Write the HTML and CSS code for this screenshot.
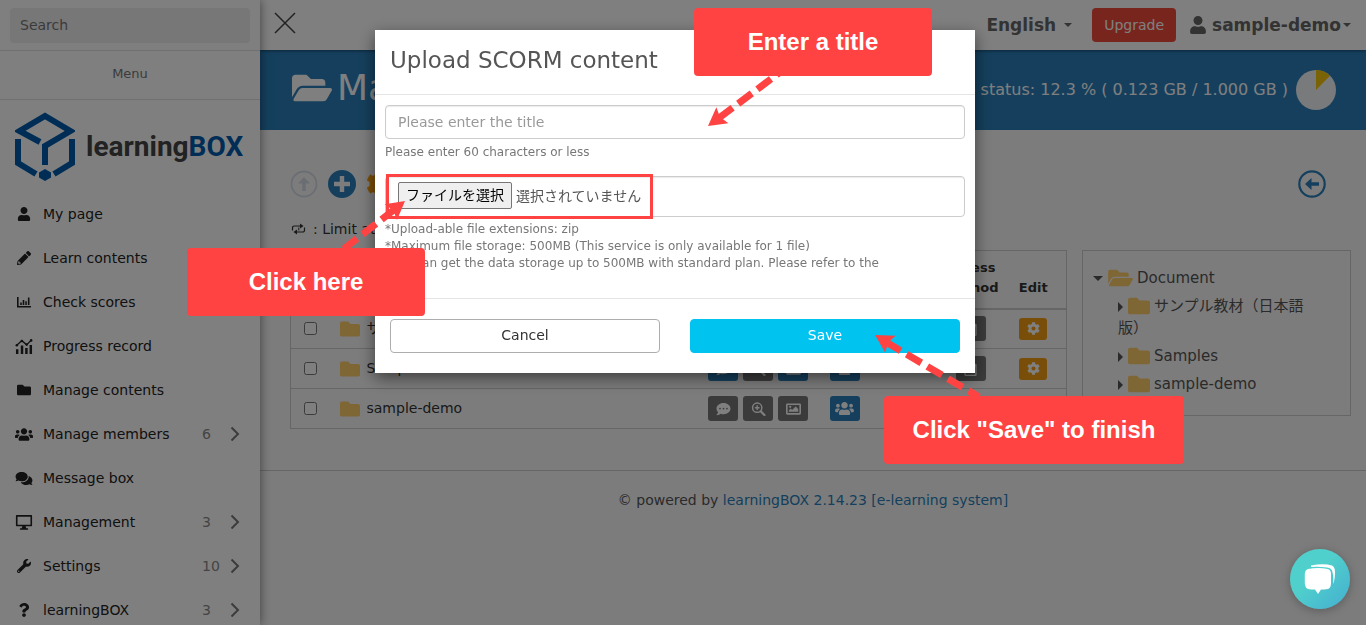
FILE: index.html
```html
<!DOCTYPE html>
<html lang="en">
<head>
    <meta charset="UTF-8">
    <meta name="viewport" content="width=device-width, initial-scale=1.0">
    <title>Manage contents - learningBOX</title>
    <link rel="stylesheet" href="styles.css">
</head>
<body>
    <!-- Icon sprite -->
    <svg class="sprite" aria-hidden="true">
        <symbol id="i-user" viewBox="0 0 448 512"><path d="M224 256c70.7 0 128-57.3 128-128S294.7 0 224 0 96 57.3 96 128s57.3 128 128 128zm89.6 32h-16.7c-22.2 10.2-46.9 16-72.9 16s-50.6-5.8-72.9-16h-16.7C60.2 288 0 348.2 0 422.4V464c0 26.5 21.5 48 48 48h352c26.5 0 48-21.5 48-48v-41.6c0-74.2-60.2-134.4-134.4-134.4z"/></symbol>
        <symbol id="i-pencil" viewBox="0 0 512 512"><path fill-rule="evenodd" d="M497.9 142.1l-46.1 46.1c-4.7 4.7-12.3 4.7-17 0l-111-111c-4.7-4.7-4.7-12.3 0-17l46.1-46.1c18.7-18.7 49.1-18.7 67.9 0l60.1 60.1c18.8 18.7 18.8 49.1 0 67.9zM284.2 99.8L21.6 362.4.4 483.9c-2.9 16.4 11.4 30.6 27.8 27.8l121.5-21.3 262.6-262.6c4.7-4.7 4.7-12.3 0-17l-111-111c-4.8-4.7-12.4-4.7-17.1 0zM88 424h48v36.300l-64.500 11.300-31.100-31.100L51.700 376H88z"/></symbol>
        <symbol id="i-chart" viewBox="0 0 14 14"><path d="M0 2h1.600v8.900H14v1.600H0zM3.200 7.500h1.600v2.400H3.200zM5.700 5h1.600v4.900H5.700zM8.300 6.300h1.500v3.600H8.300zM10.900 2.500h1.600v7.400h-1.600z"/></symbol>
        <symbol id="i-progress" viewBox="0 0 16 14"><path d="M.5 9.500h2.300V14H.5zM5 6h2.300v8H5zM9.100 8.500h2.300V14H9.100zM13.200 5.500h2.300V14h-2.300z"/><path d="M1 6l5-4.500 4.500 4L15 .8" fill="none" stroke="currentColor" stroke-width="1.300"/><circle cx="1.300" cy="5.800" r="1.200"/><circle cx="6" cy="1.800" r="1.200"/><circle cx="10.500" cy="5.200" r="1.200"/><circle cx="14.700" cy="1.300" r="1.200"/></symbol>
        <symbol id="i-folder" viewBox="0 0 512 512"><path d="M464 128H272l-64-64H48C21.490 64 0 85.490 0 112v288c0 26.510 21.490 48 48 48h416c26.510 0 48-21.490 48-48V176c0-26.510-21.490-48-48-48z"/></symbol>
        <symbol id="i-folder-open" viewBox="0 0 576 512"><path d="M572.694 292.093L500.270 416.248A63.997 63.997 0 0 1 444.989 448H45.025c-18.523 0-30.064-20.093-20.731-36.093l72.424-124.155A64 64 0 0 1 152 256h399.964c18.523 0 30.064 20.093 20.730 36.093zM152 224h328v-48c0-26.510-21.490-48-48-48H272l-64-64H48C21.490 64 0 85.490 0 112v278.046l69.077-118.418C86.214 242.250 117.989 224 152 224z"/></symbol>
        <symbol id="i-users" viewBox="0 0 640 512"><path d="M96 224c35.300 0 64-28.700 64-64s-28.700-64-64-64-64 28.700-64 64 28.700 64 64 64zm448 0c35.300 0 64-28.700 64-64s-28.700-64-64-64-64 28.700-64 64 28.700 64 64 64zm32 32h-64c-17.600 0-33.500 7.100-45.100 18.600 40.300 22.100 68.900 62 75.100 109.400h66c17.700 0 32-14.300 32-32v-32c0-35.300-28.700-64-64-64zm-256 0c61.900 0 112-50.100 112-112S381.900 32 320 32 208 82.100 208 144s50.100 112 112 112zm76.800 32h-8.300c-20.800 10-43.900 16-68.500 16s-47.600-6-68.500-16h-8.300C179.600 288 128 339.600 128 403.200V432c0 26.500 21.500 48 48 48h288c26.500 0 48-21.500 48-48v-28.800c0-63.600-51.600-115.200-115.200-115.200zm-223.700-13.400C161.500 263.100 145.600 256 128 256H64c-35.300 0-64 28.700-64 64v32c0 17.700 14.300 32 32 32h65.900c6.300-47.400 34.900-87.300 75.200-109.400z"/></symbol>
        <symbol id="i-comments" viewBox="0 0 576 512"><path d="M416 192c0-88.400-93.100-160-208-160S0 103.600 0 192c0 34.300 14.100 65.900 38 92-13.400 30.200-35.500 54.200-35.800 54.500-2.200 2.300-2.800 5.700-1.500 8.700S4.800 352 8 352c36.600 0 66.900-12.300 88.700-25 32.200 15.700 70.300 25 111.300 25 114.900 0 208-71.600 208-160zm122 220c23.900-26 38-57.700 38-92 0-66.900-53.500-124.200-129.300-148.100.9 6.600 1.300 13.300 1.300 20.100 0 105.900-107.700 192-240 192-10.800 0-21.300-.8-31.700-1.900C207.800 439.600 281.800 480 368 480c41 0 79.100-9.200 111.300-25 21.800 12.700 52.100 25 88.700 25 3.200 0 6.100-1.900 7.300-4.800 1.300-2.900.7-6.300-1.500-8.700-.3-.3-22.400-24.200-35.800-54.500z"/></symbol>
        <symbol id="i-comment" viewBox="0 0 512 512"><path fill-rule="evenodd" d="M256 32C114.600 32 0 125.100 0 240c0 49.600 21.400 95 57 130.700C44.500 421.100 2.700 466 2.200 466.500c-2.200 2.300-2.800 5.700-1.500 8.700S4.800 480 8 480c66.300 0 116-31.800 140.600-51.400 32.700 12.300 69 19.400 107.400 19.400 141.400 0 256-93.100 256-208S397.400 32 256 32zM128 272a32 32 0 1 1 0-64 32 32 0 0 1 0 64zm128 0a32 32 0 1 1 0-64 32 32 0 0 1 0 64zm128 0a32 32 0 1 1 0-64 32 32 0 0 1 0 64z"/></symbol>
        <symbol id="i-desktop" viewBox="0 0 16 14"><path d="M1.200.8h13.600v9H1.200z" fill="none" stroke="currentColor" stroke-width="1.500" stroke-linejoin="round"/><path d="M6.500 10h3l.5 2.300h1.800v1.500H4.200v-1.500H6z"/></symbol>
        <symbol id="i-wrench" viewBox="0 0 512 512"><path d="M507.730 109.100c-2.240-9.030-13.540-12.090-20.120-5.510l-74.360 74.360-67.880-11.310-11.310-67.880 74.360-74.360c6.620-6.620 3.430-17.900-5.660-20.160-47.380-11.740-99.550.91-136.580 37.930-39.640 39.640-50.550 97.100-34.050 147.200L18.740 402.760c-24.990 24.990-24.990 65.510 0 90.500 24.990 24.990 65.510 24.990 90.500 0l213.210-213.210c50.120 16.710 107.470 5.680 147.370-34.220 37.070-37.070 49.700-89.320 37.910-136.730zM64 472c-13.250 0-24-10.750-24-24 0-13.260 10.750-24 24-24s24 10.740 24 24c0 13.250-10.750 24-24 24z"/></symbol>
        <symbol id="i-question" viewBox="0 0 384 512"><path d="M202.021 0C122.202 0 70.503 32.703 29.914 91.026c-7.363 10.580-5.093 25.086 5.178 32.874l43.138 32.709c10.373 7.865 25.132 6.026 33.253-4.148 25.049-31.381 43.630-49.449 82.757-49.449 30.764 0 68.816 19.799 68.816 49.631 0 22.552-18.617 34.134-48.993 51.164-35.423 19.860-82.299 44.576-82.299 106.405V320c0 13.255 10.745 24 24 24h72.471c13.255 0 24-10.745 24-24v-5.773c0-42.860 125.268-44.645 125.268-160.627C377.504 66.256 286.902 0 202.021 0zM192 373.459c-38.196 0-69.271 31.075-69.271 69.271 0 38.195 31.075 69.270 69.271 69.270s69.271-31.075 69.271-69.271-31.075-69.270-69.271-69.270z"/></symbol>
        <symbol id="i-cog" viewBox="0 0 512 512"><path d="M487.400 315.700l-42.600-24.600c4.300-23.200 4.300-47 0-70.200l42.600-24.600c4.900-2.800 7.100-8.600 5.500-14-11.100-35.600-30-67.800-54.700-94.600-3.800-4.100-10-5.100-14.800-2.300L380.800 110c-17.900-15.400-38.500-27.300-60.800-35.100V25.800c0-5.600-3.900-10.500-9.400-11.700-36.700-8.200-74.300-7.800-109.200 0-5.500 1.200-9.400 6.100-9.400 11.700V75c-22.200 7.900-42.800 19.800-60.800 35.100L88.700 85.500c-4.900-2.800-11-1.900-14.800 2.300-24.700 26.700-43.600 58.900-54.700 94.600-1.700 5.400.6 11.200 5.500 14L67.300 221c-4.300 23.200-4.300 47 0 70.200l-42.600 24.600c-4.900 2.800-7.100 8.600-5.500 14 11.100 35.600 30 67.800 54.700 94.600 3.800 4.100 10 5.100 14.800 2.300l42.600-24.600c17.900 15.400 38.500 27.300 60.800 35.100v49.200c0 5.600 3.900 10.500 9.400 11.700 36.700 8.200 74.300 7.800 109.200 0 5.500-1.200 9.400-6.100 9.400-11.700v-49.200c22.200-7.900 42.800-19.800 60.800-35.100l42.600 24.600c4.900 2.800 11 1.900 14.800-2.300 24.700-26.700 43.600-58.900 54.700-94.600 1.500-5.500-.7-11.300-5.600-14.100zM256 336c-44.100 0-80-35.900-80-80s35.900-80 80-80 80 35.900 80 80-35.900 80-80 80z"/></symbol>
        <symbol id="i-zoom" viewBox="0 0 16 16"><g fill="none" stroke="currentColor"><circle cx="6.500" cy="6.500" r="5.300" stroke-width="1.700"/><path d="M10.500 10.500l4.300 4.300" stroke-width="2.600" stroke-linecap="round"/><path d="M6.500 3.800v5.400M3.800 6.500h5.400" stroke-width="1.600"/></g></symbol>
        <symbol id="i-image" viewBox="0 0 16 14"><path fill-rule="evenodd" d="M1.500 1h13A1.500 1.500 0 0 1 16 2.500v9a1.500 1.500 0 0 1-1.500 1.500h-13A1.500 1.500 0 0 1 0 11.500v-9A1.500 1.500 0 0 1 1.500 1zM1.700 2.700v8.600h12.600V2.700zM3 10V8.500l2-2 1.500 1.500 3.800-3.700L13 7v3zM4.500 3.500a1.200 1.200 0 1 1 0 2.400 1.200 1.200 0 0 1 0-2.400z"/></symbol>
        <symbol id="i-calendar" viewBox="0 0 14 16"><path fill-rule="evenodd" d="M3 0h2v2h4V0h2v2h1.500A1.500 1.500 0 0 1 14 3.500v11a1.500 1.500 0 0 1-1.500 1.500h-11A1.500 1.500 0 0 1 0 14.500v-11A1.500 1.500 0 0 1 1.500 2H3zM1.500 6v8.500h11V6z"/></symbol>
        <symbol id="i-chevron" viewBox="0 0 10 16"><path d="M1.500 1.500L8 8l-6.500 6.500" fill="none" stroke="currentColor" stroke-width="2"/></symbol>
        <symbol id="i-repeat" viewBox="0 0 16 12"><path d="M2 7.500V4.800Q2 3 4 3h6M14 4.500v2.700Q14 9 12 9H6" fill="none" stroke="currentColor" stroke-width="1.200"/><path d="M9.500.5l3.500 2.500-3.500 2.500zM6.500 6.500L3 9l3.500 2.500z"/><path d="M8.300 4.500v3" stroke="currentColor"/></symbol>
        <symbol id="i-arrow-circle" viewBox="0 0 28 28"><circle cx="14" cy="14" r="12.500" fill="none" stroke="currentColor" stroke-width="1.800"/><path d="M14 7l6 6.500h-4.300V21h-3.400v-7.500H8z"/></symbol>
        <symbol id="i-back-circle" viewBox="0 0 28 28"><circle cx="14" cy="14" r="12.700" fill="none" stroke="currentColor" stroke-width="2.200"/><path d="M7 14l6.500-6v4.300H21v3.400h-7.500V20z"/></symbol>
        <symbol id="i-plus-circle" viewBox="0 0 28 28"><path fill-rule="evenodd" d="M14 0a14 14 0 1 1 0 28 14 14 0 0 1 0-28zM11.800 6v5.800H6v4.400h5.800V22h4.400v-5.800H22v-4.400h-5.800V6z"/></symbol>
    </svg>

    <div class="app">
        <aside class="sidebar">
            <div class="search-box">
                <input type="text" class="search-input" placeholder="Search" aria-label="Search">
            </div>
            <p class="menu-title">Menu</p>
            <a href="#" class="logo">
                <svg class="logo-mark" viewBox="0 0 60 70" aria-hidden="true">
                    <path d="M25 30L4.500 19 30 4l25.500 15L30 34v19M3 27v24l18 11M57 27v24L39 62" fill="none" stroke="currentColor" stroke-width="6"/>
                    <path d="M30 57l6 3.500v5L30 69l-6-3.500v-5z"/>
                </svg>
                <span class="logo-text">learning<span class="logo-box">BOX</span></span>
            </a>
            <nav class="menu">
                <a href="#" class="menu-item"><svg class="menu-icon"><use href="#i-user"/></svg>My page</a>
                <a href="#" class="menu-item"><svg class="menu-icon"><use href="#i-pencil"/></svg>Learn contents</a>
                <a href="#" class="menu-item"><svg class="menu-icon"><use href="#i-chart"/></svg>Check scores</a>
                <a href="#" class="menu-item"><svg class="menu-icon wide"><use href="#i-progress"/></svg>Progress record</a>
                <a href="#" class="menu-item"><svg class="menu-icon"><use href="#i-folder"/></svg>Manage contents</a>
                <a href="#" class="menu-item"><svg class="menu-icon wide"><use href="#i-users"/></svg>Manage members<span class="count">6</span><svg class="chevron"><use href="#i-chevron"/></svg></a>
                <a href="#" class="menu-item"><svg class="menu-icon wide"><use href="#i-comments"/></svg>Message box</a>
                <a href="#" class="menu-item"><svg class="menu-icon wide"><use href="#i-desktop"/></svg>Management<span class="count">3</span><svg class="chevron"><use href="#i-chevron"/></svg></a>
                <a href="#" class="menu-item"><svg class="menu-icon"><use href="#i-wrench"/></svg>Settings<span class="count">10</span><svg class="chevron"><use href="#i-chevron"/></svg></a>
                <a href="#" class="menu-item"><svg class="menu-icon"><use href="#i-question"/></svg>learningBOX<span class="count">3</span><svg class="chevron"><use href="#i-chevron"/></svg></a>
            </nav>
        </aside>

        <div class="main">
            <header class="topbar">
                <button type="button" class="close-menu" aria-label="Close menu">
                    <svg viewBox="0 0 22 22"><path d="M1 1l20 20M21 1L1 21" stroke="currentColor" stroke-width="1.500"/></svg>
                </button>
                <button type="button" class="top-link language">English <span class="caret"></span></button>
                <a href="#" class="upgrade">Upgrade</a>
                <button type="button" class="top-link account"><svg class="account-icon"><use href="#i-user"/></svg>sample-demo<span class="caret"></span></button>
            </header>

            <div class="banner">
                <h1><svg class="banner-icon"><use href="#i-folder-open"/></svg>Manage</h1>
                <p class="storage">Storage status: 12.3 % ( 0.123 GB / 1.000 GB )</p>
                <svg class="pie" viewBox="0 0 40 40" aria-hidden="true">
                    <circle cx="20" cy="20" r="20" fill="#f1f4f9"/>
                    <path d="M20 20V0a20 20 0 0 1 14 5.700z" fill="#f5c60d"/>
                </svg>
            </div>

            <div class="content">
                <div class="toolbar">
                    <button type="button" class="tool disabled" aria-label="Up"><svg><use href="#i-arrow-circle"/></svg></button>
                    <button type="button" class="tool" aria-label="Add"><svg><use href="#i-plus-circle"/></svg></button>
                    <button type="button" class="tool orange" aria-label="Settings"><svg><use href="#i-cog"/></svg></button>
                    <button type="button" class="tool back" aria-label="Back"><svg><use href="#i-back-circle"/></svg></button>
                </div>
                <p class="legend"><svg class="legend-icon"><use href="#i-repeat"/></svg>: Limit attempts</p>

                <div class="columns">
                    <table class="contents">
                        <thead>
                            <tr>
                                <th class="col-check"></th>
                                <th>Title</th>
                                <th class="col-tools"></th>
                                <th class="col-members"></th>
                                <th class="col-status"></th>
                                <th class="col-access">Access method</th>
                                <th class="col-edit">Edit</th>
                            </tr>
                        </thead>
                        <tbody>
                            <tr>
                                <td><input type="checkbox" aria-label="サンプル教材（日本語版）"></td>
                                <td class="name"><svg class="folder"><use href="#i-folder"/></svg>サンプル教材</td>
                                <td>
                                    <div class="tools">
                                        <button type="button" class="tile blue" aria-label="Comment"><svg><use href="#i-comment"/></svg></button>
                                        <button type="button" class="tile" aria-label="Preview"><svg><use href="#i-zoom"/></svg></button>
                                        <button type="button" class="tile blue" aria-label="Image"><svg><use href="#i-image"/></svg></button>
                                    </div>
                                </td>
                                <td><button type="button" class="tile blue" aria-label="Members"><svg class="wide"><use href="#i-users"/></svg></button></td>
                                <td></td>
                                <td><button type="button" class="tile" aria-label="Period"><svg><use href="#i-calendar"/></svg></button></td>
                                <td><button type="button" class="tile edit" aria-label="Edit"><svg><use href="#i-cog"/></svg></button></td>
                            </tr>
                            <tr>
                                <td><input type="checkbox" aria-label="Samples"></td>
                                <td class="name"><svg class="folder"><use href="#i-folder"/></svg>Samples</td>
                                <td>
                                    <div class="tools">
                                        <button type="button" class="tile blue" aria-label="Comment"><svg><use href="#i-comment"/></svg></button>
                                        <button type="button" class="tile" aria-label="Preview"><svg><use href="#i-zoom"/></svg></button>
                                        <button type="button" class="tile blue" aria-label="Image"><svg><use href="#i-image"/></svg></button>
                                    </div>
                                </td>
                                <td><button type="button" class="tile blue" aria-label="Members"><svg class="wide"><use href="#i-users"/></svg></button></td>
                                <td></td>
                                <td><button type="button" class="tile" aria-label="Period"><svg><use href="#i-calendar"/></svg></button></td>
                                <td><button type="button" class="tile edit" aria-label="Edit"><svg><use href="#i-cog"/></svg></button></td>
                            </tr>
                            <tr>
                                <td><input type="checkbox" aria-label="sample-demo"></td>
                                <td class="name"><svg class="folder"><use href="#i-folder"/></svg>sample-demo</td>
                                <td>
                                    <div class="tools">
                                        <button type="button" class="tile" aria-label="Comment"><svg><use href="#i-comment"/></svg></button>
                                        <button type="button" class="tile" aria-label="Preview"><svg><use href="#i-zoom"/></svg></button>
                                        <button type="button" class="tile" aria-label="Image"><svg><use href="#i-image"/></svg></button>
                                    </div>
                                </td>
                                <td><button type="button" class="tile blue" aria-label="Members"><svg class="wide"><use href="#i-users"/></svg></button></td>
                                <td></td>
                                <td><button type="button" class="tile" aria-label="Period"><svg><use href="#i-calendar"/></svg></button></td>
                                <td><button type="button" class="tile edit" aria-label="Edit"><svg><use href="#i-cog"/></svg></button></td>
                            </tr>
                        </tbody>
                    </table>

                    <div class="tree">
                        <p class="tree-root"><span class="caret"></span><svg class="folder open"><use href="#i-folder-open"/></svg>Document</p>
                        <ul>
                            <li><span class="caret-right"></span><svg class="folder"><use href="#i-folder"/></svg>サンプル教材（日本語版）</li>
                            <li><span class="caret-right"></span><svg class="folder"><use href="#i-folder"/></svg>Samples</li>
                            <li><span class="caret-right"></span><svg class="folder"><use href="#i-folder"/></svg>sample-demo</li>
                        </ul>
                    </div>
                </div>
            </div>

            <footer class="page-footer">© powered by <a href="#">learningBOX 2.14.23 [e-learning system]</a></footer>
        </div>
    </div>

    <!-- Upload dialog -->
    <div class="overlay">
        <form class="modal" role="dialog" aria-labelledby="modalTitle">
            <h2 class="modal-header" id="modalTitle">Upload SCORM content</h2>
            <div class="modal-body">
                <input type="text" id="title" class="text-input" placeholder="Please enter the title" aria-label="Title">
                <label class="help" for="title">Please enter 60 characters or less</label>
                <div class="file-box">
                    <input type="file" id="scormFile" class="file-input">
                    <label for="scormFile" class="file-button">ファイルを選択</label>
                    <span>選択されていません</span>
                </div>
                <p class="notes">*Upload-able file extensions: zip<br>*Maximum file storage: 500MB (This service is only available for 1 file)<br>*You can get the data storage up to 500MB with standard plan. Please refer to the</p>
            </div>
            <div class="modal-footer">
                <button type="button" class="btn">Cancel</button>
                <button type="submit" class="btn save">Save</button>
            </div>

            <!-- Guide callouts, anchored to the dialog -->
            <div class="highlight"></div>
            <svg class="arrows" viewBox="0 0 600 343" aria-hidden="true">
                <g stroke="#ff4343" stroke-width="7" stroke-dasharray="17 7">
                    <path d="M344 88L404 43"/>
                    <path d="M20 179L-34 221"/>
                    <path d="M511 312L604 367"/>
                </g>
                <g fill="#ff4343">
                    <path transform="translate(333 96) rotate(-37)" d="M0 0l18-10-3 10 3 10z"/>
                    <path transform="translate(30 171) rotate(142)" d="M0 0l18-10-3 10 3 10z"/>
                    <path transform="translate(500 305) rotate(31)" d="M0 0l18-10-3 10 3 10z"/>
                </g>
            </svg>
            <div class="callout callout-title">Enter a title</div>
            <div class="callout callout-file">Click here</div>
            <div class="callout callout-save">Click "Save" to finish</div>
        </form>
    </div>

    <button type="button" class="chat" aria-label="Chat">
        <svg viewBox="0 0 32 30">
            <path d="M7 1.500Q20-1 28 1.500 31 3 31 8q0 8-2 12Q30 12 28 6.500 27 4 23 3.500 15 2.500 7 3z"/>
            <path d="M4 5q10-2 20 0 3 1 3 5v9q0 5-3 6-4 .6-7 .6L14 30l-3-4.400Q7 25.500 4 25 1 24 .8 19V10Q1 6 4 5z"/>
        </svg>
    </button>
</body>
</html>
```
FILE: styles.css
```css
:root {
    --blue: #2a7fba;
    --orange: #f39c12;
    --red: #ff4343;
    --folder: #ffcc6a;
    --border: #ccc;
}

* {
    margin: 0;
    padding: 0;
    box-sizing: border-box;
}

body {
    font-family: "DejaVu Sans", "Noto Sans CJK JP", sans-serif;
    font-size: 14px;
    line-height: 20px;
    color: #333;
    background: #f9f9f9;
    overflow: hidden;
}

a {
    text-decoration: none;
}

button {
    font: inherit;
    border: none;
    background: none;
    cursor: pointer;
}

svg {
    fill: currentColor;
    flex: none;
}

.sprite {
    display: none;
}

.app {
    display: flex;
    height: 100vh;
}

/* Sidebar */
.sidebar {
    flex: 0 0 260px;
    background: #fff;
    box-shadow: 0 0 10px rgba(0, 0, 0, 0.5);
    overflow: hidden;
    z-index: 1;
}

.search-box {
    padding: 8px 10px 7px;
    border-bottom: 1px solid #e0e0e0;
}

.search-input {
    display: block;
    width: 100%;
    height: 35px;
    padding: 0 10px 2px;
    border: none;
    border-radius: 4px;
    background: #efefef;
    font: inherit;
}

.search-input::placeholder {
    color: #777;
}

.menu-title {
    padding: 13px 0 15px;
    text-align: center;
    font-size: 13px;
    color: #777;
    border-bottom: 1px solid #e0e0e0;
}

.logo {
    display: flex;
    align-items: center;
    gap: 11px;
    padding: 12px 15px 10px;
    color: #005bac;
}

.logo-mark {
    width: 60px;
    height: 70px;
}

.logo-text {
    font: bold 28px/32px Roboto, sans-serif;
    color: #444;
}

.logo-box {
    color: #005bac;
}

.menu-item {
    display: flex;
    align-items: center;
    height: 44px;
    padding: 0 20px 0 15px;
    color: #222;
}

.menu-icon {
    width: 18px;
    height: 14px;
    margin-right: 10px;
}

.menu-icon.wide {
    height: 15px;
}

.count {
    width: 28px;
    margin-left: auto;
    color: #888;
}

.chevron {
    width: 10px;
    height: 16px;
    color: #777;
}

/* Top bar */
.main {
    flex: 1;
    min-width: 0;
}

.topbar {
    display: flex;
    align-items: center;
    height: 50px;
    padding: 0 15px 0 14px;
    background: #fff;
    box-shadow: 0 1px 3px rgba(0, 0, 0, 0.4);
    position: relative;
}

.close-menu {
    width: 22px;
    height: 22px;
    margin: 0 auto 4px 0;
    color: #444;
}

.close-menu svg {
    display: block;
}

.top-link {
    display: flex;
    align-items: center;
    font-size: 17px;
    font-weight: bold;
    color: #666;
}

.caret {
    display: inline-block;
    margin-left: 8px;
    border: 4px solid transparent;
    border-top-color: currentColor;
    border-bottom: none;
}

.upgrade {
    margin: 0 14px 0 20px;
    padding: 7px 12px;
    border-radius: 4px;
    background: #f04a3c;
    color: #fff;
}

.account-icon {
    width: 16px;
    height: 18px;
    margin-right: 6px;
}

.account .caret {
    margin-left: 2px;
}

.banner {
    display: flex;
    align-items: center;
    height: 80px;
    padding: 0 30px 0 32px;
    background: var(--blue);
    color: #fff;
}

.banner h1 {
    display: flex;
    align-items: center;
    gap: 5px;
    margin: 0 auto 4px 0;
    font-size: 36px;
    font-weight: normal;
    line-height: 40px;
}

.banner-icon {
    width: 40px;
    height: 36px;
}

.storage {
    font-size: 16px;
}

.pie {
    width: 40px;
    height: 40px;
    margin-left: 8px;
}

/* Content area */
.content {
    padding: 40px 15px 0 30px;
}

.toolbar {
    display: flex;
    gap: 10px;
    padding-right: 25px;
}

.tool {
    width: 28px;
    height: 28px;
    color: var(--blue);
}

.tool svg {
    display: block;
    width: 28px;
    height: 28px;
}

.tool.disabled {
    color: #d5dde5;
}

.tool.orange {
    color: var(--orange);
}

.tool.back {
    margin-left: auto;
}

.legend {
    display: flex;
    align-items: center;
    gap: 6px;
    margin: 21px 0 11px;
}

.legend-icon {
    width: 17px;
    height: 12px;
}

.columns {
    display: flex;
    align-items: flex-start;
    gap: 15px;
}

.contents {
    flex: 1;
    table-layout: fixed;
    border-collapse: collapse;
    border: 1px solid var(--border);
}

.contents th {
    height: 58px;
    padding-bottom: 10px;
    font-size: 13px;
    vertical-align: bottom;
    border-bottom: 2px solid var(--border);
}

.contents td {
    height: 40px;
    text-align: center;
    border-bottom: 1px solid var(--border);
}

.contents th:nth-child(2),
.contents .name {
    text-align: left;
    padding-left: 9px;
}

.col-check {
    width: 40px;
}

.col-tools {
    width: 125px;
}

.col-members {
    width: 48px;
}

.col-status {
    width: 72px;
}

.col-access {
    width: 60px;
}

.col-edit {
    width: 66px;
}

.contents input {
    display: block;
    width: 13px;
    height: 13px;
    margin: 0 auto;
}

.folder {
    width: 20px;
    height: 20px;
    margin-right: 7px;
    color: var(--folder);
    vertical-align: middle;
}

.tools {
    display: flex;
    justify-content: center;
    gap: 5px;
}

.tile {
    display: inline-flex;
    align-items: center;
    justify-content: center;
    width: 30px;
    height: 25px;
    border-radius: 3px;
    background: #777;
    color: #fff;
    vertical-align: middle;
}

.tile svg {
    width: 15px;
    height: 14px;
}

.tile svg.wide {
    width: 19px;
    height: 15px;
}

.tile.blue {
    background: var(--blue);
}

.tile.edit {
    width: 28px;
    height: 22px;
    background: var(--orange);
}

.tile.edit svg {
    width: 13px;
    height: 13px;
}

.tree {
    flex: 0 0 269px;
    padding: 16px 30px 14px 10px;
    border: 1px solid var(--border);
    font-size: 15px;
    line-height: 22px;
    color: #555;
}

.tree .caret {
    margin: 0 5px 0 0;
    border-width: 5px;
    border-bottom: none;
    vertical-align: middle;
}

.tree .folder {
    width: 22px;
    height: 22px;
    margin: 0 4px 0 0;
    vertical-align: top;
}

.tree .folder.open {
    width: 25px;
}

.tree-root {
    margin-bottom: 6px;
}

.tree ul {
    padding-left: 25px;
    list-style: none;
}

.tree li {
    margin-bottom: 6px;
    word-break: break-all;
}

.caret-right {
    display: inline-block;
    margin-right: 5px;
    border: 5px solid transparent;
    border-left-color: currentColor;
    border-right: none;
    vertical-align: middle;
}

.page-footer {
    margin-top: 41px;
    padding: 19px 0;
    border-top: 1px solid var(--border);
    text-align: center;
    color: #555;
}

.page-footer a {
    color: var(--blue);
}

/* Upload dialog */
.overlay {
    position: fixed;
    inset: 0;
    z-index: 10;
    padding-right: 16px;
    background: rgba(0, 0, 0, 0.5);
}

.modal {
    position: relative;
    width: 600px;
    margin: 30px auto;
    background: #fff;
    box-shadow: 0 5px 15px rgba(0, 0, 0, 0.5);
}

.modal-header {
    padding: 14px 15px 18px;
    border-bottom: 1px solid #e5e5e5;
    font-size: 23px;
    font-weight: normal;
    line-height: 32px;
    color: #555;
}

.modal-body {
    padding: 10px 10px 26px;
    border-bottom: 1px solid #e5e5e5;
    color: #777;
}

.text-input {
    display: block;
    width: 100%;
    height: 34px;
    padding: 0 12px;
    border: 1px solid var(--border);
    border-radius: 4px;
    box-shadow: inset 0 1px 1px rgba(0, 0, 0, 0.08);
    font: inherit;
}

.text-input::placeholder {
    color: #999;
}

.help {
    display: block;
    margin: 4px 0 15px;
    font-size: 12px;
    line-height: 18px;
}

.file-box {
    display: flex;
    align-items: center;
    gap: 4px;
    height: 41px;
    padding: 0 12px 2px;
    border: 1px solid var(--border);
    border-radius: 4px;
    box-shadow: inset 0 1px 1px rgba(0, 0, 0, 0.08);
    color: #555;
}

.file-input {
    position: absolute;
    width: 1px;
    height: 1px;
    opacity: 0;
}

.file-button {
    padding: 2px 7px;
    border: 1px solid #767676;
    border-radius: 2px;
    background: #efefef;
    color: #000;
    line-height: 21px;
}

.notes {
    margin-top: 4px;
    font-size: 12px;
    line-height: 17px;
}

.modal-footer {
    display: flex;
    gap: 30px;
    padding: 20px 15px;
}

.btn {
    flex: 1;
    height: 34px;
    padding-bottom: 2px;
    border: 1px solid #adadad;
    border-radius: 4px;
    background: #fff;
    color: #333;
}

.btn.save {
    border-color: #00c3f0;
    background: #00c3f0;
    color: #fff;
}

/* Guide callouts */
.highlight {
    position: absolute;
    top: 144px;
    left: 11px;
    width: 267px;
    height: 45px;
    border: 3px solid var(--red);
}

.arrows {
    position: absolute;
    top: 0;
    left: 0;
    width: 600px;
    height: 343px;
    overflow: visible;
}

.callout {
    position: absolute;
    width: 238px;
    border-radius: 4px;
    background: var(--red);
    color: #fff;
    font: bold 24px/68px "Liberation Sans", Arial, sans-serif;
    text-align: center;
}

.callout-title {
    top: -22px;
    left: 319px;
}

.callout-file {
    top: 218px;
    left: -188px;
}

.callout-save {
    top: 366px;
    left: 509px;
    width: 300px;
}

.chat {
    position: fixed;
    right: 16px;
    bottom: 16px;
    z-index: 20;
    width: 60px;
    height: 60px;
    border-radius: 50%;
    background: linear-gradient(135deg, #50d0cc 40%, #45aed0);
    box-shadow: 0 2px 10px rgba(0, 0, 0, 0.25);
    color: #fff;
}

.chat svg {
    width: 32px;
    height: 30px;
    vertical-align: middle;
}
```
